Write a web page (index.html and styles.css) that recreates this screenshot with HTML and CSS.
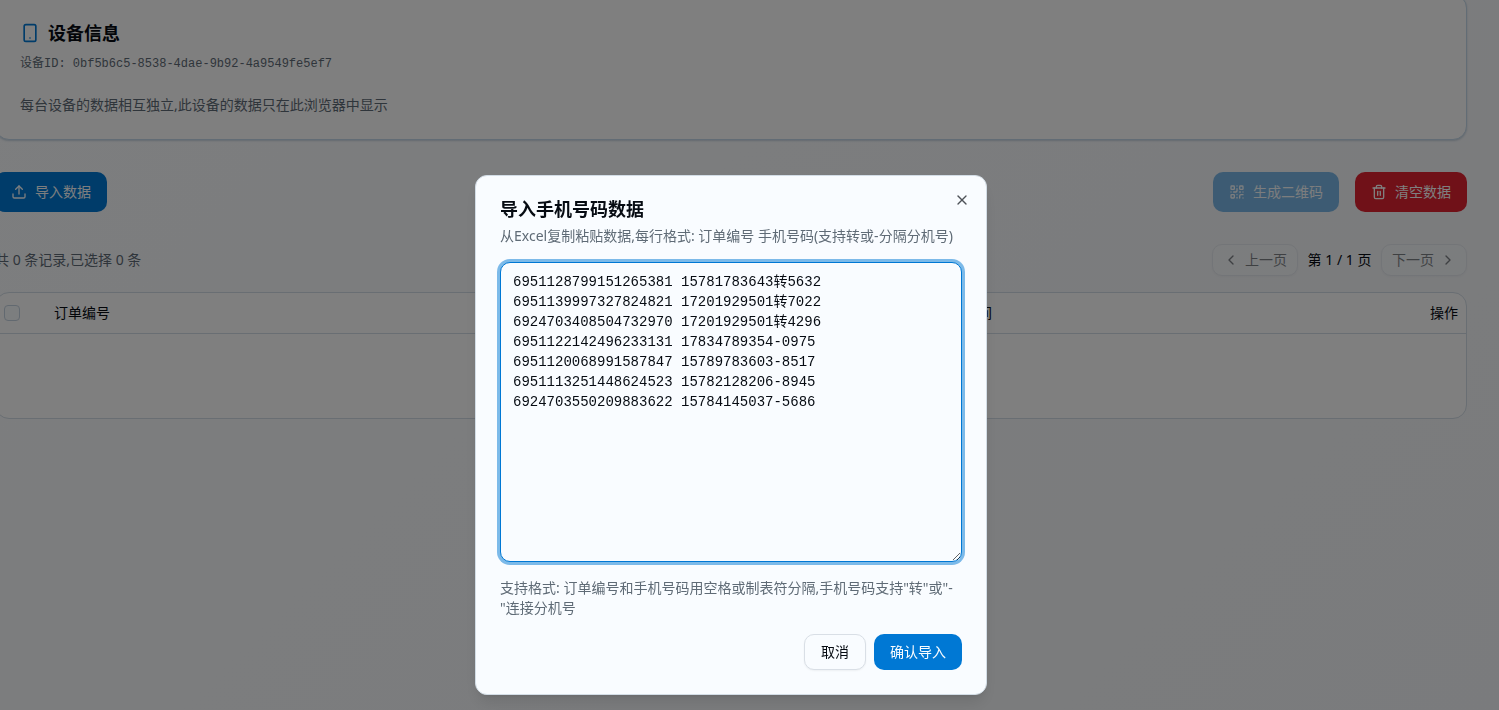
FILE: index.html
```html
<!DOCTYPE html>
<html lang="zh-CN">
<head>
<meta charset="utf-8">
<meta name="viewport" content="width=device-width, initial-scale=1">
<title>导入手机号码数据</title>
<link rel="stylesheet" href="styles.css">
</head>
<body>
<main class="page">
  <section class="card device">
    <h2 class="device-title">
      <svg class="icon icon-lg" viewBox="0 0 24 24"><rect x="5" y="2" width="14" height="20" rx="2"/><path d="M12 18h.01"/></svg>
      设备信息
    </h2>
    <p class="device-id">设备ID: 0bf5b6c5-8538-4dae-9b92-4a9549fe5ef7</p>
    <p class="device-note">每台设备的数据相互独立,此设备的数据只在此浏览器中显示</p>
  </section>

  <div class="toolbar">
    <button class="btn btn-lg btn-primary" type="button">
      <svg class="icon" viewBox="0 0 24 24"><path d="M12 3v12"/><path d="m17 8-5-5-5 5"/><path d="M21 15v4a2 2 0 0 1-2 2H5a2 2 0 0 1-2-2v-4"/></svg>
      导入数据
    </button>
    <div class="toolbar-group">
      <button class="btn btn-lg btn-primary" type="button" disabled>
        <svg class="icon" viewBox="0 0 24 24"><rect x="3" y="3" width="5" height="5" rx="1"/><rect x="16" y="3" width="5" height="5" rx="1"/><rect x="3" y="16" width="5" height="5" rx="1"/><path d="M21 16h-3a2 2 0 0 0-2 2v3"/><path d="M21 21v.01"/><path d="M12 7v3a2 2 0 0 1-2 2H7"/><path d="M3 12h.01"/><path d="M12 3h.01"/><path d="M12 16v.01"/><path d="M16 12h1"/><path d="M21 12v.01"/><path d="M12 21v-1"/></svg>
        生成二维码
      </button>
      <button class="btn btn-lg btn-danger" type="button">
        <svg class="icon" viewBox="0 0 24 24"><path d="M10 11v6"/><path d="M14 11v6"/><path d="M19 6v14a2 2 0 0 1-2 2H7a2 2 0 0 1-2-2V6"/><path d="M3 6h18"/><path d="M8 6V4a2 2 0 0 1 2-2h4a2 2 0 0 1 2 2v2"/></svg>
        清空数据
      </button>
    </div>
  </div>

  <div class="summary">
    <p class="muted">共 0 条记录,已选择 0 条</p>
    <nav class="pager" aria-label="分页">
      <button class="btn btn-sm btn-outline" type="button" disabled>
        <svg class="icon" viewBox="0 0 24 24"><path d="m15 18-6-6 6-6"/></svg>
        上一页
      </button>
      <span class="pager-label">第 1 / 1 页</span>
      <button class="btn btn-sm btn-outline" type="button" disabled>
        下一页
        <svg class="icon" viewBox="0 0 24 24"><path d="m9 18 6-6-6-6"/></svg>
      </button>
    </nav>
  </div>

  <div class="card table-card">
    <table class="records">
      <thead>
        <tr>
          <th class="col-check"><input class="check" type="checkbox" aria-label="全选"></th>
          <th class="col-order">订单编号</th>
          <th class="col-time">创建时间</th>
          <th class="col-action">操作</th>
        </tr>
      </thead>
      <tbody><tr><td class="empty" colspan="4"></td></tr></tbody>
    </table>
  </div>
</main>

<div class="overlay">
  <dialog class="dialog" open aria-labelledby="dialog-title" aria-describedby="dialog-desc">
    <header class="dialog-head">
      <h2 class="dialog-title" id="dialog-title">导入手机号码数据</h2>
      <p class="muted" id="dialog-desc">从Excel复制粘贴数据,每行格式: 订单编号 手机号码(支持转或-分隔分机号)</p>
    </header>
    <textarea class="import-text" aria-labelledby="dialog-title" spellcheck="false">6951128799151265381 15781783643转5632
6951139997327824821 17201929501转7022
6924703408504732970 17201929501转4296
6951122142496233131 17834789354-0975
6951120068991587847 15789783603-8517
6951113251448624523 15782128206-8945
6924703550209883622 15784145037-5686</textarea>
    <p class="muted">支持格式: 订单编号和手机号码用空格或制表符分隔,手机号码支持"转"或"-"连接分机号</p>
    <footer class="dialog-actions">
      <button class="btn btn-outline" type="button">取消</button>
      <button class="btn btn-primary" type="button">确认导入</button>
    </footer>
    <button class="dialog-close" type="button" aria-label="关闭">
      <svg class="icon" viewBox="0 0 24 24"><path d="M18 6 6 18"/><path d="m6 6 12 12"/></svg>
    </button>
  </dialog>
</div>
</body>
</html>
```
FILE: styles.css
```css
:root {
  --primary: #0078d4;
  --danger: #e02230;
  --text: #060b12;
  --muted: #5f6b76;
  --border: #d3dde6;
  --surface: #f9fcff;
  --sans: "Noto Sans", "Noto Sans CJK SC", sans-serif;
  --mono: "Liberation Mono", "Noto Sans CJK SC", monospace;
}

* { box-sizing: border-box; }

html { overflow: hidden; }

body {
  margin: 0;
  min-height: 100vh;
  background: linear-gradient(135deg, #fafcfe, #f5f7fa);
  color: var(--text);
  font: 14px/20px var(--sans);
}

h2, p { margin: 0; }

button, input, textarea { font: inherit; color: inherit; }

.page {
  display: flex;
  flex-direction: column;
  margin: -6px 32px 0 -5px;
}

.icon {
  width: 16px;
  height: 16px;
  flex: none;
  fill: none;
  stroke: currentColor;
  stroke-width: 2;
  stroke-linecap: round;
  stroke-linejoin: round;
}

.icon-lg {
  width: 20px;
  height: 20px;
  color: var(--primary);
}

.muted { color: var(--muted); }

.card {
  background: #fefefe;
  border: 1px solid var(--border);
  border-radius: 14px;
}

.device {
  padding: 24px;
  border-color: #c5d9ea;
  box-shadow: 0 1px 2px rgba(0, 60, 110, 0.2);
}

.device-title {
  display: flex;
  align-items: center;
  gap: 8px;
  font-size: 18px;
  line-height: 28px;
}

.device-id {
  margin: 8px 0 22px;
  color: var(--muted);
  font: 12px/18px var(--mono);
}

.device-note { color: var(--muted); }

.toolbar {
  display: flex;
  justify-content: space-between;
  margin: 32px 0;
}

.toolbar-group {
  display: flex;
  gap: 16px;
}

.btn {
  display: inline-flex;
  align-items: center;
  justify-content: center;
  gap: 8px;
  height: 36px;
  padding: 0 16px;
  border: 0;
  border-radius: 10px;
  white-space: nowrap;
}

.btn:disabled { opacity: 0.5; }

.btn-lg { height: 40px; }

.btn-sm {
  height: 32px;
  padding: 0 10px;
  gap: 6px;
}

.btn-primary {
  background: var(--primary);
  color: #fafdff;
}

.btn-danger {
  background: var(--danger);
  color: #fff;
}

.btn-outline {
  background: var(--surface);
  border: 1px solid #d9dfe6;
  box-shadow: 0 1px 2px rgba(0, 0, 0, 0.05);
}

.summary {
  display: flex;
  align-items: center;
  justify-content: space-between;
  margin-bottom: 16px;
}

.pager {
  display: flex;
  align-items: center;
  gap: 8px;
}

.pager-label {
  min-width: 67px;
  text-align: center;
}

.table-card { overflow: hidden; }

.records {
  width: 100%;
  table-layout: fixed;
  border-collapse: separate;
  border-spacing: 0;
}

.records th {
  height: 41px;
  padding: 0 8px;
  border-bottom: 1px solid var(--border);
  font-weight: 400;
  text-align: left;
}

.records .col-check { width: 50px; }
.records .col-order { width: 60%; }
.records .col-action { text-align: right; }

.empty {
  height: 84px;
  padding: 0;
}

.check {
  display: block;
  appearance: none;
  width: 16px;
  height: 16px;
  margin: 0;
  background: var(--surface);
  border: 1px solid #c5d3e0;
  border-radius: 4px;
}

.overlay {
  position: fixed;
  inset: 0 0 -160px -37px;
  display: flex;
  align-items: center;
  justify-content: center;
  background: rgba(0, 0, 0, 0.5);
}

.dialog {
  position: relative;
  display: flex;
  flex-direction: column;
  gap: 16px;
  width: 100%;
  max-width: 512px;
  margin: 0;
  padding: 24px;
  color: var(--text);
  background: var(--surface);
  border: 1px solid var(--border);
  border-radius: 12px;
  box-shadow: 0 10px 15px -3px rgba(0, 0, 0, 0.1), 0 4px 6px -4px rgba(0, 0, 0, 0.1);
}

.dialog-head {
  display: flex;
  flex-direction: column;
  gap: 8px;
}

.dialog-title {
  font-size: 18px;
  line-height: 18px;
}

.import-text {
  display: block;
  width: 100%;
  height: 300px;
  padding: 9px 12px;
  background: var(--surface);
  border: 1px solid var(--primary);
  border-radius: 10px;
  outline: 0;
  box-shadow: 0 0 0 3px rgba(0, 120, 212, 0.5);
  font: 14px/20px var(--mono);
  resize: vertical;
}

.dialog-actions {
  display: flex;
  justify-content: flex-end;
  gap: 8px;
}

.dialog-close {
  position: absolute;
  top: 16px;
  right: 16px;
  display: flex;
  padding: 0;
  background: none;
  border: 0;
  opacity: 0.7;
}
```
